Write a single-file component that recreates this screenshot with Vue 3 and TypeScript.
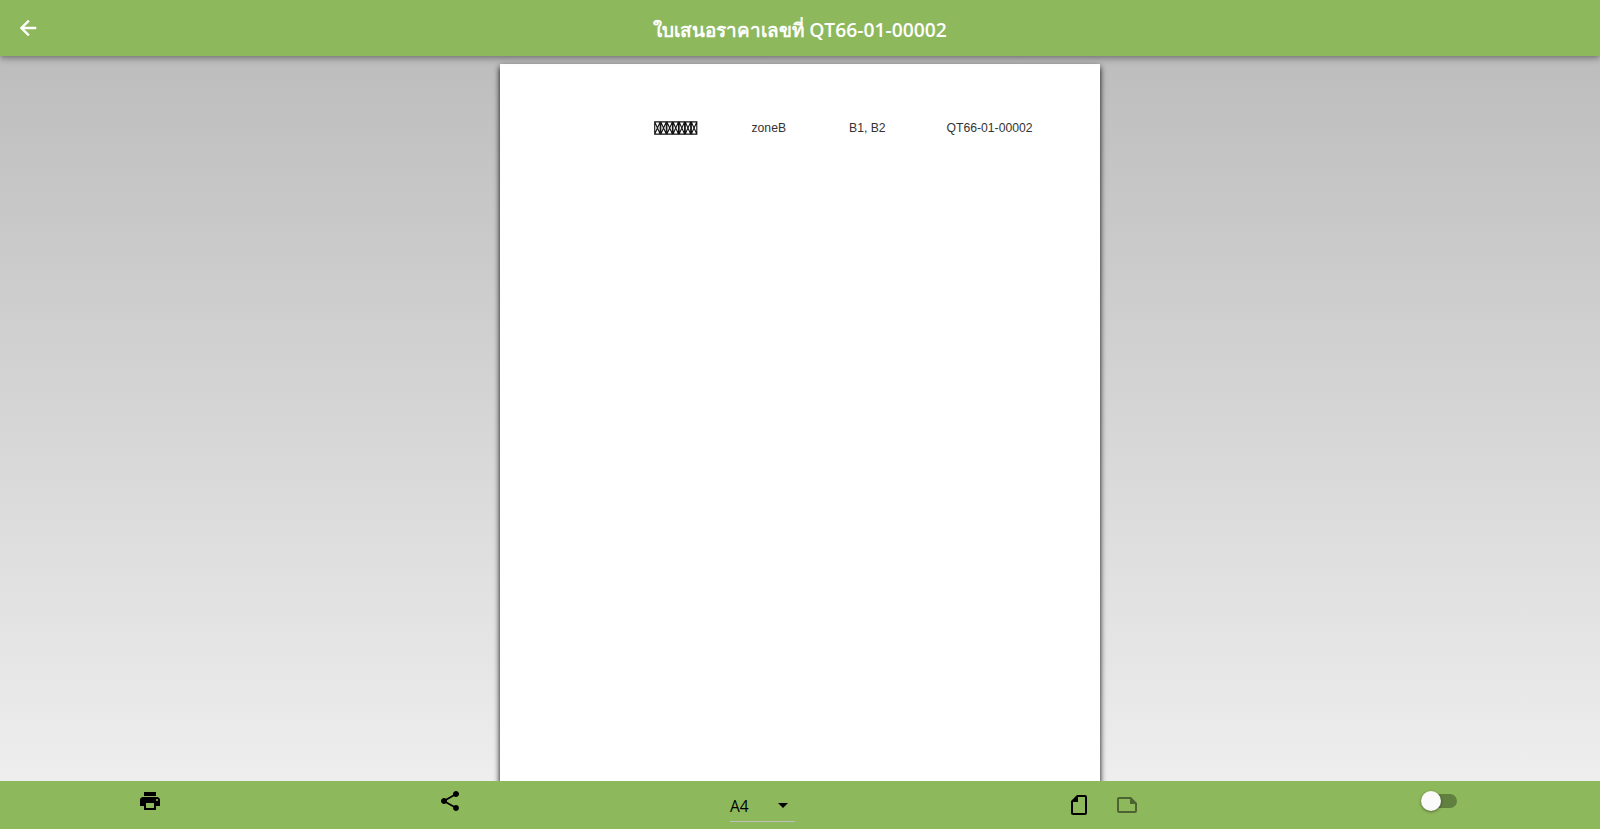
<script setup lang="ts">
interface Cell {
  text: string
  kind: string
}

const docNumber: string = 'QT66-01-00002'
const pageFormat: string = 'A4'
const cells: Cell[] = [
  { text: 'zoneB', kind: 'zone' },
  { text: 'B1, B2', kind: 'lots' },
  { text: docNumber, kind: 'number' },
]
const missingGlyphs: number[] = [0, 1, 2, 3, 4, 5, 6]
</script>

<template>
  <div class="screen">
    <header class="app-bar">
      <button class="icon-button back" aria-label="Back">
        <svg viewBox="0 0 24 24"><path d="M20 11H7.83l5.59-5.59L12 4l-8 8 8 8 1.41-1.41L7.83 13H20v-2z" /></svg>
      </button>
      <h1><span class="label">ใบเสนอราคาเลขที่</span> {{ docNumber }}</h1>
      <div class="bar-end"></div>
    </header>

    <main class="preview">
      <article class="sheet">
        <div class="row">
          <div class="cell missing">
            <svg viewBox="0 0 44 14" width="44" height="14">
              <g v-for="i in missingGlyphs" :key="i" :transform="`translate(${i * 6.1} 0)`">
                <path d="M.7.9h5.5v12.2H.7zM.7.9l5.5 12.2M6.2.9L.7 13.1" />
              </g>
            </svg>
          </div>
          <div v-for="cell in cells" :key="cell.kind" class="cell"><span>{{ cell.text }}</span></div>
        </div>
      </article>
    </main>

    <footer class="actions">
      <button class="icon-button print" aria-label="Print">
        <svg viewBox="0 0 24 24"><path d="M19 8H5c-1.66 0-3 1.34-3 3v6h4v4h12v-4h4v-6c0-1.66-1.34-3-3-3zm-3 11H8v-5h8v5zm3-7c-.55 0-1-.45-1-1s.45-1 1-1 1 .45 1 1-.45 1-1 1zm-1-9H6v4h12V3z" /></svg>
      </button>
      <button class="icon-button share" aria-label="Share">
        <svg viewBox="0 0 24 24"><path d="M18 16.08c-.76 0-1.44.3-1.96.77L8.91 12.7c.05-.23.09-.46.09-.7s-.04-.47-.09-.7l7.05-4.11c.54.5 1.25.81 2.04.81 1.66 0 3-1.34 3-3s-1.34-3-3-3-3 1.34-3 3c0 .24.04.47.09.7L8.04 9.81C7.5 9.31 6.79 9 6 9c-1.66 0-3 1.34-3 3s1.34 3 3 3c.79 0 1.5-.31 2.04-.81l7.12 4.16c-.05.21-.08.43-.08.65 0 1.61 1.31 2.92 2.92 2.92s2.92-1.31 2.92-2.92-1.31-2.92-2.92-2.92z" /></svg>
      </button>
      <div class="format">
        <span>{{ pageFormat }}</span>
        <svg viewBox="0 0 24 24"><path d="M7 10l5 5 5-5z" /></svg>
      </div>
      <div class="orientation">
        <button class="icon-button portrait" aria-label="Portrait">
          <svg viewBox="0 0 24 24"><path d="M16 4H4c-1.1 0-2 .9-2 2v12c0 1.1.9 2 2 2h16c1.1 0 2-.9 2-2v-8l-6-6zM4 18V6h11v5h5v7H4z" /></svg>
        </button>
        <button class="icon-button landscape" aria-label="Landscape">
          <svg viewBox="0 0 24 24"><path d="M16 4H4c-1.1 0-2 .9-2 2v12c0 1.1.9 2 2 2h16c1.1 0 2-.9 2-2v-8l-6-6zM4 18V6h11v5h5v7H4z" /></svg>
        </button>
      </div>
      <div class="switch"><div class="thumb"></div></div>
    </footer>
  </div>
</template>

<style>
body {
  margin: 0;
  overflow: hidden;
}
</style>

<style scoped>
.screen {
  display: flex;
  flex-direction: column;
  height: 100vh;
  overflow: hidden;
  font-family: "Open Sans", "Noto Sans", sans-serif;
}
.app-bar {
  position: relative;
  z-index: 1;
  flex: none;
  display: flex;
  align-items: center;
  justify-content: space-between;
  box-sizing: border-box;
  height: 56px;
  padding: 0 16px;
  color: #fff;
  background: #8eb85c;
  box-shadow: 0 2px 4px -1px rgba(0, 0, 0, 0.2), 0 4px 5px rgba(0, 0, 0, 0.14), 0 1px 10px rgba(0, 0, 0, 0.12);
}
.icon-button {
  display: block;
  flex: none;
  width: 24px;
  height: 24px;
  padding: 0;
  border: 0;
  background: none;
  color: inherit;
}
.icon-button svg {
  display: block;
  width: 24px;
  height: 24px;
  fill: currentColor;
}
.back svg {
  stroke: currentColor;
  stroke-width: 0.5;
}
.bar-end {
  width: 24px;
}
h1 {
  margin: 0;
  padding-top: 3px;
  font-size: 19.3px;
  line-height: 28px;
  font-weight: 600;
  white-space: nowrap;
}
.label {
  font-size: 18.9px;
}
.preview {
  flex: 1;
  min-height: 0;
  overflow: hidden;
  padding-top: 8px;
  background: linear-gradient(#bdbdbd, #eee);
}
.sheet {
  box-sizing: border-box;
  width: 600px;
  height: 849px;
  margin: 0 auto;
  padding: 54px 56px 0 154px;
  background: #fff;
  box-shadow: 0 3px 6px #000;
}
.row {
  display: grid;
  grid-template-columns: repeat(4, 97.5px);
  height: 20px;
  align-items: center;
  font-family: "Liberation Sans", Arial, sans-serif;
  font-size: 12.2px;
  line-height: 20px;
  color: #333;
  white-space: nowrap;
}
.missing svg {
  display: block;
  fill: none;
  stroke: #111;
  stroke-width: 1.1;
}
.actions {
  position: relative;
  flex: none;
  display: flex;
  align-items: flex-start;
  box-sizing: border-box;
  height: 48px;
  padding: 8px 143px 0 138px;
  background: #8eb85c;
  color: #000;
}
.share {
  margin-left: 276px;
}
.format {
  display: flex;
  align-items: center;
  justify-content: space-between;
  box-sizing: border-box;
  width: 65px;
  height: 33px;
  margin-left: 268px;
  border-bottom: 1px solid #bdbdbd;
  font-size: 15.5px;
}
.format span {
  padding-top: 2px;
}
.format svg {
  width: 24px;
  height: 24px;
}
.orientation {
  display: flex;
  gap: 24px;
  margin: 4px 0 0 272px;
}
.portrait svg {
  transform: rotate(-90deg);
}
.landscape {
  opacity: 0.45;
}
.switch {
  width: 36px;
  height: 14px;
  margin: 5px 0 0 auto;
  border-radius: 7px;
  background: #61803f;
}
.thumb {
  width: 20px;
  height: 20px;
  border-radius: 50%;
  background: #fafafa;
  box-shadow: 0 1px 3px rgba(0, 0, 0, 0.45);
  transform: translateY(-3px);
}
</style>
